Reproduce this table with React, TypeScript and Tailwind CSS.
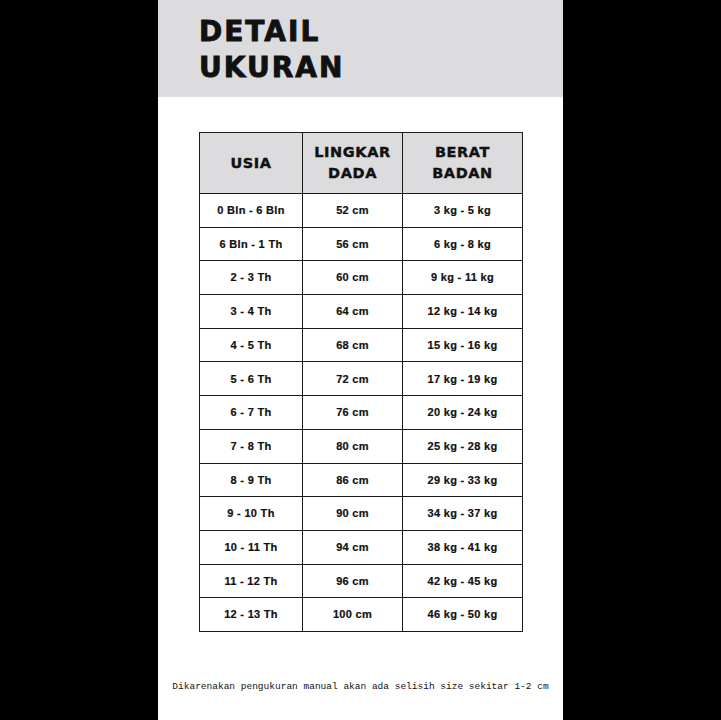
const rows: [string, string, string][] = [
  ["0 Bln - 6 Bln", "52 cm", "3 kg - 5 kg"],
  ["6 Bln - 1 Th", "56 cm", "6 kg - 8 kg"],
  ["2 - 3 Th", "60 cm", "9 kg - 11 kg"],
  ["3 - 4 Th", "64 cm", "12 kg - 14 kg"],
  ["4 - 5 Th", "68 cm", "15 kg - 16 kg"],
  ["5 - 6 Th", "72 cm", "17 kg - 19 kg"],
  ["6 - 7 Th", "76 cm", "20 kg - 24 kg"],
  ["7 - 8 Th", "80 cm", "25 kg - 28 kg"],
  ["8 - 9 Th", "86 cm", "29 kg - 33 kg"],
  ["9 - 10 Th", "90 cm", "34 kg - 37 kg"],
  ["10 - 11 Th", "94 cm", "38 kg - 41 kg"],
  ["11 - 12 Th", "96 cm", "42 kg - 45 kg"],
  ["12 - 13 Th", "100 cm", "46 kg - 50 kg"],
];

export default function App() {
  return (
    <div className="flex h-[720px] w-[721px] justify-center bg-black">
      <div className="flex h-full w-[405px] flex-col bg-white">
        <header className="h-[97px] bg-[#dcdbde] pl-[41px] pt-[14px]">
          <h1 className="font-['DejaVu_Sans',sans-serif] text-[28px] font-bold leading-[36px] tracking-[2px] text-[#111] [-webkit-text-stroke:0.9px_#111]">
            DETAIL
            <br />
            UKURAN
          </h1>
        </header>

        <table className="ml-[41px] mt-[35px] w-[324px] border-collapse text-center text-[#111]">
          <thead>
            <tr className="h-[61px] bg-[#dcdbde] font-['DejaVu_Sans',sans-serif] text-[14.5px] font-bold leading-[21px] tracking-[0.6px] [-webkit-text-stroke:0.4px_#111]">
              <th className="w-[103px] border-[1.5px] border-[#1a1a1a]">USIA</th>
              <th className="w-[100px] border-[1.5px] border-[#1a1a1a]">
                LINGKAR
                <br />
                DADA
              </th>
              <th className="border-[1.5px] border-[#1a1a1a]">
                BERAT
                <br />
                BADAN
              </th>
            </tr>
          </thead>
          <tbody className="font-['Liberation_Sans',sans-serif] text-[11px] font-bold tracking-[0.3px] [-webkit-text-stroke:0.2px_#111]">
            {rows.map((r) => (
              <tr key={r[0]} className="h-[33.7px]">
                {r.map((c, i) => (
                  <td key={i} className="border-[1.5px] border-[#1a1a1a] p-0">
                    {c}
                  </td>
                ))}
              </tr>
            ))}
          </tbody>
        </table>

        <p className="mt-[48px] text-center font-['Liberation_Mono',monospace] text-[9.5px] text-[#111]">
          Dikarenakan pengukuran manual akan ada selisih size sekitar 1-2 cm
        </p>
      </div>
    </div>
  );
}
